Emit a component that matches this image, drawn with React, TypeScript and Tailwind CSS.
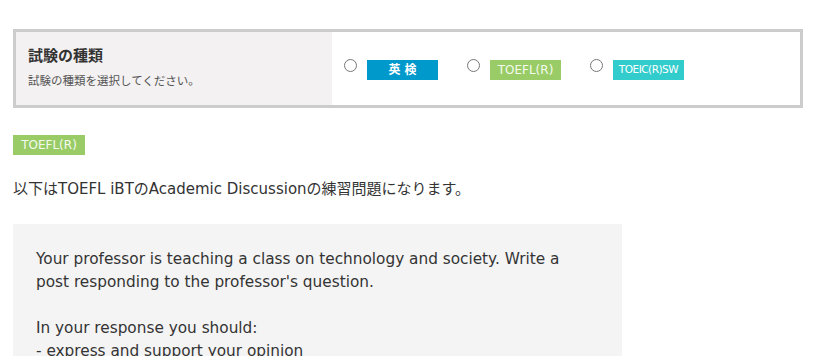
import React from 'react';

const jp = '"DejaVu Sans", "Noto Sans CJK JP", sans-serif';

function Radio() {
  return <span className="inline-block w-[13px] h-[13px] rounded-full border border-[#767676] bg-white shrink-0 -mt-[9px]" />;
}

function Badge({ kind }: { kind: 'eiken' | 'toefl' | 'toeic' }) {
  if (kind === 'eiken') {
    return (
      <span className="inline-flex items-center justify-center w-[71px] h-[20px] bg-[#0099cc] text-white text-[12px] font-bold tracking-[4px] pl-[4px]">
        英検
      </span>
    );
  }
  if (kind === 'toefl') {
    return (
      <span className="inline-flex items-center justify-center w-[71px] h-[20px] bg-[#99cc66] text-[#f4faee] text-[12px] font-medium">
        TOEFL(R)
      </span>
    );
  }
  return (
    <span className="inline-flex items-center justify-center w-[71px] h-[20px] bg-[#33cccc] text-white text-[10.5px] font-medium tracking-[-0.5px]">
      TOEIC(R)SW
    </span>
  );
}

export default function App() {
  return (
    <div className="min-h-screen bg-white text-[#333] pl-[13px] pt-[29px]" style={{ fontFamily: jp }}>
      {/* 試験の種類 */}
      <div className="flex w-[790px] h-[79px] border-[3px] border-[#cccccc]">
        <div className="w-[316px] bg-[#f3f1f1] pl-[12px] pt-[13px]">
          <div className="text-[15px] font-bold leading-[22px] text-[#333]">試験の種類</div>
          <div className="text-[11.5px] leading-[16px] mt-[6px] text-[#555]">試験の種類を選択してください。</div>
        </div>
        <div className="flex items-center pl-[12px] pt-[3px]">
          <label className="flex items-center gap-[10px] mr-[29px]">
            <Radio />
            <Badge kind="eiken" />
          </label>
          <label className="flex items-center gap-[10px] mr-[29px]">
            <Radio />
            <Badge kind="toefl" />
          </label>
          <label className="flex items-center gap-[10px]">
            <Radio />
            <Badge kind="toeic" />
          </label>
        </div>
      </div>

      <div className="mt-[24px]">
        <span className="inline-flex items-center justify-center w-[72px] h-[20px] bg-[#99cc66] text-[#f4faee] text-[12px] font-medium">
          TOEFL(R)
        </span>
      </div>

      <p className="mt-[21px] text-[15px] leading-[24px]">
        以下はTOEFL iBTのAcademic Discussionの練習問題になります。
      </p>

      {/* 問題文 */}
      <div className="mt-[23px] w-[609px] bg-[#f4f4f4] pl-[23px] pr-[36px] pt-[24px] pb-[24px] text-[15.3px] leading-[23px] text-[#333]">
        <p>Your professor is teaching a class on technology and society. Write a post responding to the professor's question.</p>
        <p className="mt-[23px]">In your response you should:</p>
        <p>- express and support your opinion</p>
        <p>- make a contribution to the discussion in your own words</p>
      </div>
    </div>
  );
}
